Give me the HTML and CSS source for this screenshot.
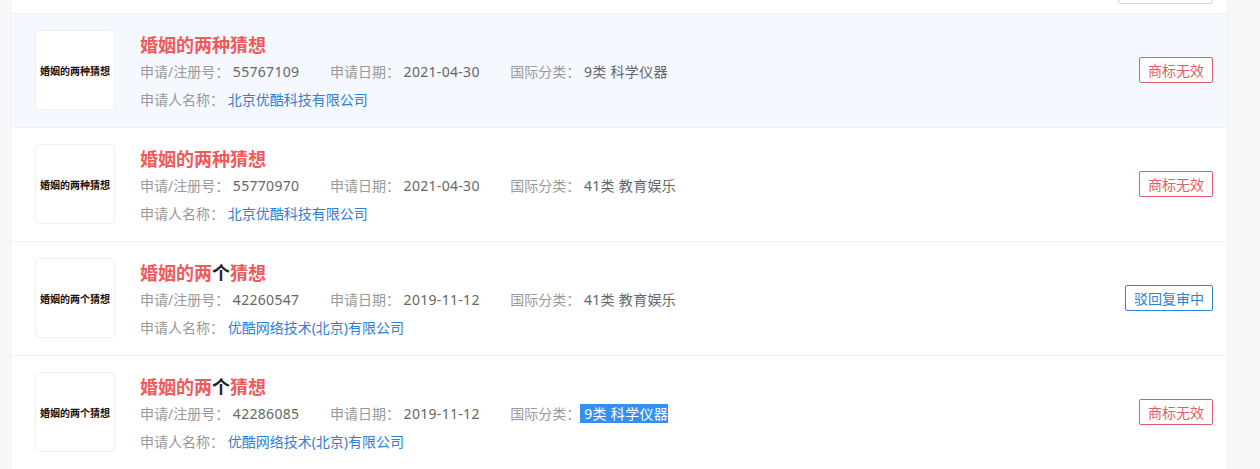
FILE: index.html
```html
<!DOCTYPE html>
<html lang="zh">
<head>
<meta charset="utf-8">
<link rel="stylesheet" href="styles.css">
</head>
<body>
<div class="card">
  <div class="topbar"><span class="topbtn"></span></div>

  <div class="row active">
    <div class="thumb"><span>婚姻的两种猜想</span></div>
    <div class="info">
      <div class="title">婚姻的两种猜想</div>
      <div class="meta">
        <span class="field"><span class="lbl">申请/注册号：</span> <span class="val">55767109</span></span>
        <span class="field"><span class="lbl">申请日期：</span> <span class="val">2021-04-30</span></span>
        <span class="field"><span class="lbl">国际分类：</span> <span class="val">9类 科学仪器</span></span>
      </div>
      <div class="meta"><span class="lbl">申请人名称：</span> <span class="link">北京优酷科技有限公司</span></div>
    </div>
    <span class="tag red">商标无效</span>
  </div>

  <div class="row">
    <div class="thumb"><span>婚姻的两种猜想</span></div>
    <div class="info">
      <div class="title">婚姻的两种猜想</div>
      <div class="meta">
        <span class="field"><span class="lbl">申请/注册号：</span> <span class="val">55770970</span></span>
        <span class="field"><span class="lbl">申请日期：</span> <span class="val">2021-04-30</span></span>
        <span class="field"><span class="lbl">国际分类：</span> <span class="val">41类 教育娱乐</span></span>
      </div>
      <div class="meta"><span class="lbl">申请人名称：</span> <span class="link">北京优酷科技有限公司</span></div>
    </div>
    <span class="tag red">商标无效</span>
  </div>

  <div class="row">
    <div class="thumb"><span>婚姻的两个猜想</span></div>
    <div class="info">
      <div class="title">婚姻的两<span class="dark">个</span>猜想</div>
      <div class="meta">
        <span class="field"><span class="lbl">申请/注册号：</span> <span class="val">42260547</span></span>
        <span class="field"><span class="lbl">申请日期：</span> <span class="val">2019-11-12</span></span>
        <span class="field"><span class="lbl">国际分类：</span> <span class="val">41类 教育娱乐</span></span>
      </div>
      <div class="meta"><span class="lbl">申请人名称：</span> <span class="link">优酷网络技术(北京)有限公司</span></div>
    </div>
    <span class="tag blue">驳回复审中</span>
  </div>

  <div class="row">
    <div class="thumb"><span>婚姻的两个猜想</span></div>
    <div class="info">
      <div class="title">婚姻的两<span class="dark">个</span>猜想</div>
      <div class="meta">
        <span class="field"><span class="lbl">申请/注册号：</span> <span class="val">42286085</span></span>
        <span class="field"><span class="lbl">申请日期：</span> <span class="val">2019-11-12</span></span>
        <span class="field"><span class="lbl">国际分类：</span><span class="val sel"> 9类 科学仪器</span></span>
      </div>
      <div class="meta"><span class="lbl">申请人名称：</span> <span class="link">优酷网络技术(北京)有限公司</span></div>
    </div>
    <span class="tag red">商标无效</span>
  </div>
</div>
</body>
</html>
```

FILE: styles.css
```css
html, body {
  margin: 0;
  padding: 0;
  background: #f7f8fa;
  font-family: "Noto Sans", "Noto Sans CJK SC", sans-serif;
}
.card {
  margin-left: 10px;
  width: 1216px;
  background: #fff;
  border-left: 1px solid #eef0f3;
  border-right: 1px solid #eef0f3;
  height: 469px;
  overflow: hidden;
}
.topbar {
  height: 13px;
  border-bottom: 1px solid #eef0f3;
  display: flex;
  justify-content: flex-end;
  padding-right: 14px;
}
.topbtn {
  display: block;
  width: 93px;
  height: 3px;
  border: 1px solid #d9d9d9;
  border-top: none;
  border-radius: 0 0 3px 3px;
}
.row {
  display: flex;
  align-items: flex-start;
  height: 97px;
  padding: 16px 14px 0 24px;
  border-bottom: 1px solid #eef0f3;
}
.row.active {
  background: #f5f8fe;
}
.thumb {
  width: 78px;
  height: 78px;
  border: 1px solid #eef0f3;
  border-radius: 4px;
  background: #fff;
  display: flex;
  align-items: center;
  justify-content: center;
  flex-shrink: 0;
}
.thumb span {
  font-family: "Noto Sans CJK SC", sans-serif;
  font-size: 10px;
  font-weight: 700;
  color: #111;
  white-space: nowrap;
}
.info {
  margin-left: 25px;
  flex: 1;
}
.title {
  font-family: "Noto Sans CJK SC", sans-serif;
  font-size: 18px;
  font-weight: 700;
  color: #f15a5a;
  line-height: 28px;
}
.title .dark {
  color: #222;
}
.meta {
  font-size: 14px;
  line-height: 28px;
  white-space: nowrap;
}
.field {
  margin-right: 27px;
}
.lbl {
  color: #999;
}
.val {
  color: #666;
  letter-spacing: 0.3px;
}
.val.sel {
  background: #3390f0;
  color: #fff;
}
.link {
  color: #2f80d6;
}
.tag {
  align-self: center;
  margin-top: -17px;
  font-family: "Noto Sans CJK SC", sans-serif;
  font-size: 14px;
  line-height: 24px;
  padding: 0 8px;
  border-radius: 2px;
  border: 1px solid;
  background: #fff;
}
.tag.red {
  color: #e45c66;
  border-color: #e45c66;
}
.tag.blue {
  color: #2d83cf;
  border-color: #2d83cf;
}
```
